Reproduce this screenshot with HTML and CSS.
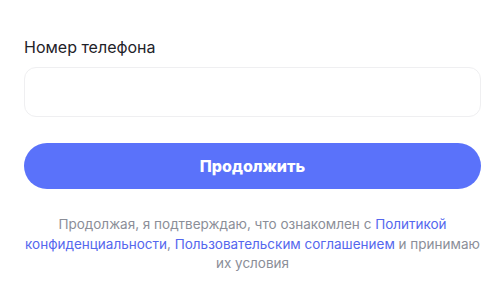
FILE: index.html
```html
<!DOCTYPE html>
<html lang="ru">
<head>
  <meta charset="UTF-8">
  <meta name="viewport" content="width=device-width, initial-scale=1.0">
  <title>Вход</title>
  <link rel="stylesheet" href="styles.css">
</head>
<body>
  <form class="login">
    <label class="field-label" for="phone">Номер телефона</label>
    <input type="tel" id="phone" class="field-input">

    <button type="button" class="submit">Продолжить</button>

    <p class="terms">
      Продолжая, я подтверждаю, что ознакомлен с <a href="#">Политикой конфиденциальности</a>,
      <a href="#">Пользовательским соглашением</a> и принимаю их условия
    </p>
  </form>
</body>
</html>
```

FILE: styles.css
```css
body {
  margin: 0;
  font-family: Inter, "Noto Sans", sans-serif;
  background: #fff;
  color: #1f2229;
}

.login {
  display: flex;
  flex-direction: column;
  padding: 36px 19px 0 24px;
}

.field-label {
  font-size: 16px;
  line-height: 22px;
  margin-bottom: 9px;
}

.field-input {
  height: 50px;
  box-sizing: border-box;
  border: 1px solid #efeff1;
  border-radius: 12px;
  background: #fff;
  padding: 0 16px;
  font: inherit;
  outline: none;
}

.submit {
  margin-top: 26px;
  height: 46px;
  border: none;
  border-radius: 23px;
  background: #5a72fa;
  color: #fff;
  font-family: inherit;
  font-size: 16px;
  font-weight: 800;
  cursor: pointer;
}

.terms {
  margin: 26px -4px 0;
  text-align: center;
  font-size: 13.5px;
  line-height: 19.5px;
  color: #8b8e98;
}

.terms a {
  color: #5567ee;
  text-decoration: none;
}
```
